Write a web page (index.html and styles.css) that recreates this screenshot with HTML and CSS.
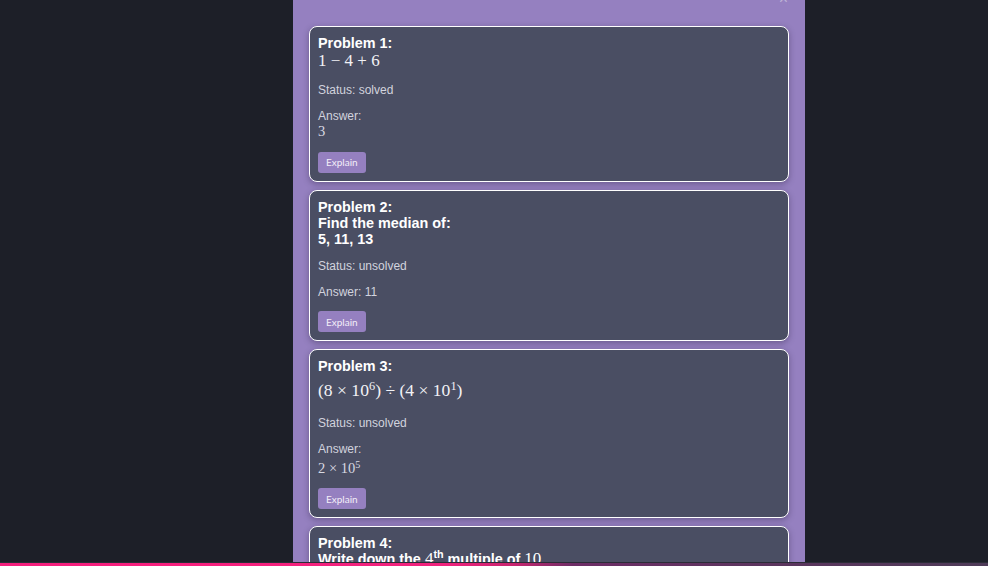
FILE: index.html
```html
<!DOCTYPE html>
<html lang="en">
<head>
<meta charset="utf-8">
<title>Problems</title>
<link rel="stylesheet" href="styles.css">
</head>
<body>
<div class="main">
  <section class="panel">
    <button class="close" aria-label="Close">×</button>
    <div class="list">
      <article class="card">
        <h3 class="title">Problem 1:</h3>
        <div class="math big">1 − 4 + 6</div>
        <p class="info">Status: solved</p>
        <div class="info">Answer:<div class="math small">3</div></div>
        <button class="explain">Explain</button>
      </article>
      <article class="card">
        <h3 class="title">Problem 2:<br>Find the median of:<br>5, 11, 13</h3>
        <p class="info">Status: unsolved</p>
        <p class="info">Answer: 11</p>
        <button class="explain">Explain</button>
      </article>
      <article class="card">
        <h3 class="title">Problem 3:</h3>
        <div class="math big sup-line">(8 × 10<sup>6</sup>) ÷ (4 × 10<sup>1</sup>)</div>
        <p class="info">Status: unsolved</p>
        <div class="info">Answer:<div class="math small sup-line-s">2 × 10<sup>5</sup></div></div>
        <button class="explain">Explain</button>
      </article>
      <article class="card">
        <h3 class="title">Problem 4:<br>Write down the <span class="m">4</span><sup class="th">th</sup> multiple of <span class="m">10</span></h3>
        <p class="info">Status: unsolved</p>
        <p class="info">Answer:</p>
        <button class="explain">Explain</button>
      </article>
    </div>
  </section>
</div>
<div class="bar"></div>
</body>
</html>
```
FILE: styles.css
```css
html, body {
  margin: 0;
  padding: 0;
}
body {
  width: 988px;
  height: 566px;
  overflow: hidden;
  background: #1d1f28;
  font-family: "Liberation Sans", Arial, sans-serif;
  display: flex;
  flex-direction: column;
}
.main {
  height: 562px;
  overflow: hidden;
  display: flex;
}
.panel {
  position: relative;
  margin-left: 293px;
  width: 512px;
  box-sizing: border-box;
  padding: 26px 16px 0;
  background: #9580c0;
  overflow: hidden;
}
.close {
  position: absolute;
  top: -9px;
  right: 17px;
  border: 0;
  background: none;
  padding: 0;
  font-family: "Liberation Sans", Arial, sans-serif;
  font-size: 16px;
  line-height: 16px;
  color: #bdb3d6;
}
.list {
  display: flex;
  flex-direction: column;
  gap: 8px;
}
.card {
  background: #4a4e63;
  border: 1px solid #ffffff;
  border-radius: 8px;
  padding: 8px 8px 8px;
  box-shadow: 0 2px 6px rgba(30, 20, 50, 0.35);
  display: flex;
  flex-direction: column;
  align-items: flex-start;
}
.title {
  margin: 0;
  font-size: 14.4px;
  font-weight: bold;
  line-height: 16.2px;
  color: #ffffff;
}
.math {
  font-family: "Liberation Serif", "Times New Roman", serif;
  color: #f2f2f6;
}
.math.big {
  font-size: 17px;
  line-height: 20px;
}
.math.small {
  font-size: 14.5px;
  line-height: 16.7px;
  color: #d8d9e2;
}
.math sup {
  font-size: 0.7em;
  line-height: 0;
  vertical-align: 0.5em;
}
.sup-line {
  font-size: 17.6px !important;
  padding: 6px 0 4px;
}
.sup-line-s {
  padding-top: 3.5px;
}
.info {
  margin: 12px 0 0;
  font-size: 12px;
  line-height: 14px;
  color: #d2d3de;
}
.m {
  font-family: "Liberation Serif", "Times New Roman", serif;
  font-weight: normal;
  font-size: 17px;
}
.th {
  font-size: 0.75em;
  line-height: 0;
  vertical-align: 0.55em;
}
.explain {
  margin-top: 12px;
  height: 20.7px;
  padding: 0 8px;
  border: 0;
  border-radius: 3px;
  background: #9580c0;
  color: #f3eef8;
  font-family: Lato, "Open Sans", sans-serif;
  font-size: 10px;
  line-height: 20px;
}
.bar {
  height: 3px;
  border-top: 1px solid #2b2c37;
  background: linear-gradient(90deg, #f41f7d 0%, #f7207e 18%, #f0227d 45%, #c8246f 52%, #6d2d66 58%, #5d345f 75%, #4e3b58 100%);
}
```
